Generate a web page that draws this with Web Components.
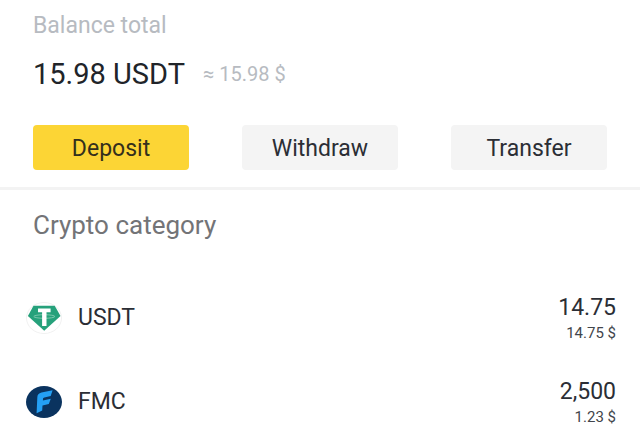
<!DOCTYPE html>
<html lang="en">
<head>
<meta charset="utf-8">
<meta name="viewport" content="width=device-width, initial-scale=1">
<title>Wallet</title>
<style>
body { margin: 0; background: #fff; color: #2b2e35; font-family: Roboto, "Liberation Sans", sans-serif; }
</style>
</head>
<body>
<wallet-page>
  <balance-summary slot="summary">
    <span slot="label">Balance total</span>
    <span slot="amount">15.98 USDT</span>
    <span slot="approx">≈ 15.98 $</span>
    <action-button slot="actions" class="primary">Deposit</action-button>
    <action-button slot="actions">Withdraw</action-button>
    <action-button slot="actions">Transfer</action-button>
  </balance-summary>
  <span slot="heading">Crypto category</span>
  <asset-row>
    <coin-icon slot="icon" coin="usdt"></coin-icon>
    <span slot="name">USDT</span>
    <span slot="amount">14.75</span>
    <span slot="value">14.75 $</span>
  </asset-row>
  <asset-row>
    <coin-icon slot="icon" coin="fmc"></coin-icon>
    <span slot="name">FMC</span>
    <span slot="amount">2,500</span>
    <span slot="value">1.23 $</span>
  </asset-row>
</wallet-page>

<script>
class BaseElement extends HTMLElement {
  constructor() {
    super();
    this.attachShadow({ mode: "open" });
  }
  connectedCallback() { this.shadowRoot.innerHTML = this.render(); }
}

customElements.define("action-button", class extends BaseElement {
  render() {
    return `<style>
      :host { display: block; }
      button { display: block; width: 100%; border: 0; border-radius: 4px; padding: 10px 0 7px;
        background: #f4f4f4; color: #2b2e35; font: 23px/28px Roboto, "Liberation Sans", sans-serif; cursor: pointer; }
      :host(.primary) button { background: #fcd535; color: #34301c; }
    </style><button type="button"><slot></slot></button>`;
  }
});

customElements.define("balance-summary", class extends BaseElement {
  render() {
    return `<style>
      :host { display: block; padding: 11px 33px 17px; border-bottom: 3px solid #f3f3f3; }
      .label { color: #b7bbc1; font-size: 23px; line-height: 30px; }
      .total { display: flex; align-items: center; gap: 18px; margin-top: 13px; line-height: 40px; }
      .amount { font-size: 29px; color: #212429; }
      .approx { font-size: 20px; color: #b7bbc1; }
      .actions { display: grid; grid-template-columns: repeat(3, 1fr); gap: 53px; margin-top: 31px; }
    </style>
    <div class="label"><slot name="label"></slot></div>
    <div class="total">
      <span class="amount"><slot name="amount"></slot></span>
      <span class="approx"><slot name="approx"></slot></span>
    </div>
    <div class="actions"><slot name="actions"></slot></div>`;
  }
});

const coins = {
  usdt: `<ellipse cx="18" cy="16" rx="17.5" ry="15.5" fill="#fff" stroke="#f1f1f1"/>
    <path d="M7.500 3.800h21.200l5.800 10.200L18.200 28.800 1.900 14z" fill="#26a17b"/>
    <ellipse cx="18.300" cy="14.500" rx="10.500" ry="1.800" fill="none" stroke="#8fd0b8" stroke-width=".8"/>
    <path d="M12 6.400h12.600v3.800h-4.100V24h-4.400V10.200H12z" fill="#fff"/>`,
  fmc: `<ellipse cx="18" cy="16" rx="18" ry="16" fill="#0a335f"/>
    <path d="M26.600 4.300L15.500 6.600c-2.800.6-4.100 2.200-4.200 4.900L10.600 27.300l5.600-2.700.3-5.200 6.300-1.500 2-5.100-7.900 1.700.1-1.500c.1-.8.500-1.200 1.400-1.400l6.300-1.500z" fill="#24a0f5"/>`
};

customElements.define("coin-icon", class extends BaseElement {
  render() {
    return `<style>
      :host { display: block; }
      svg { display: block; width: 36px; height: 32px; }
    </style><svg viewBox="0 0 36 32" aria-hidden="true">${coins[this.getAttribute("coin")]}</svg>`;
  }
});

customElements.define("asset-row", class extends BaseElement {
  render() {
    return `<style>
      :host { display: flex; align-items: center; gap: 16px; padding: 0 24px 0 26px; }
      .name { flex: 1; font-size: 23px; line-height: 28px; }
      .figures { padding-top: 2px; text-align: right; }
      .amount { font-size: 23px; line-height: 28px; }
      .value { font-size: 15px; line-height: 22px; color: #42454b; }
    </style>
    <slot name="icon"></slot>
    <div class="name"><slot name="name"></slot></div>
    <div class="figures">
      <div class="amount"><slot name="amount"></slot></div>
      <div class="value"><slot name="value"></slot></div>
    </div>`;
  }
});

customElements.define("wallet-page", class extends BaseElement {
  render() {
    return `<style>
      :host { display: block; }
      h2 { margin: 0; padding: 19px 33px 0; font-size: 26px; line-height: 32px; font-weight: 400; color: #737477; }
      .list { display: grid; gap: 32px; padding-top: 51px; }
    </style>
    <slot name="summary"></slot>
    <h2><slot name="heading"></slot></h2>
    <div class="list"><slot></slot></div>`;
  }
});
</script>
</body>
</html>
